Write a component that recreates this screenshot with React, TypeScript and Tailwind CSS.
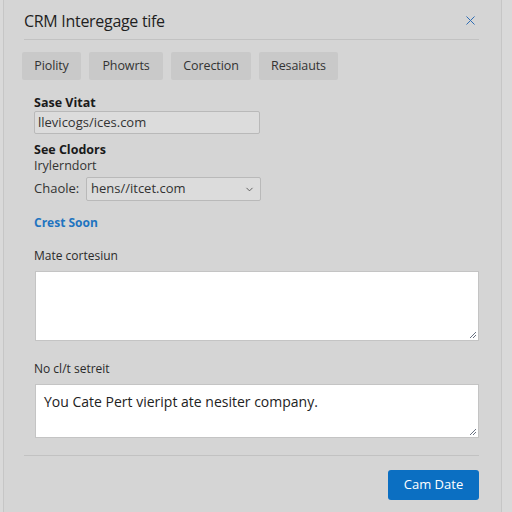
import { X, ChevronDown } from 'lucide-react';

const tabs = ['Piolity', 'Phowrts', 'Corection', 'Resaiauts'];

function ResizeGrip() {
    return (
        <svg width="9" height="9" viewBox="0 0 9 9" className="absolute right-[1px] bottom-[1px] text-gray-500">
            <path d="M8 2 L2 8 M8 5 L5 8" stroke="currentColor" strokeWidth="1" />
        </svg>
    );
}

export default function App() {
    return (
        <div className="w-[512px] h-[512px] bg-[#d9d9d9] overflow-hidden" style={{ fontFamily: '"Open Sans", "Noto Sans", sans-serif' }}>
            <div className="h-full ml-[3px] mr-[10px] bg-[#d5d5d5] border-x border-[#c6c6c6] px-[20px]">
                {/* Header */}
                <div className="flex items-center justify-between h-[40px] pt-[2px] border-b border-[#c2c2c2] mr-[2px]">
                    <h1 className="text-[16px] text-[#1f1f1f] tracking-[-0.3px]">CRM Interegage tife</h1>
                    <X size={15} strokeWidth={1.6} className="text-[#2e6db4] mr-[1px]" />
                </div>

                {/* Tabs */}
                <div className="flex gap-[8px] mt-[12px] -ml-[2px]">
                    {tabs.map((t, i) => (
                        <div
                            key={t}
                            className={
                                'h-[28px] flex items-center justify-center bg-[#c9c9c9] rounded-[2px] text-[12.5px] text-[#333] tracking-[-0.1px] ' +
                                (i === 0 ? 'w-[59px]' : i === 1 ? 'w-[74px]' : i === 2 ? 'w-[80px]' : 'w-[79px]')
                            }
                        >
                            {t}
                        </div>
                    ))}
                </div>

                <div className="pl-[10px]">
                    {/* Site */}
                    <div className="mt-[15px] text-[12.5px] font-bold text-[#1a1a1a] leading-[16px]">Sase Vitat</div>
                    <div className="w-[226px] h-[23px] bg-[#dcdcdc] border border-[#b9b9b9] rounded-[2px] flex items-center px-[3px] text-[13px] text-[#333]">
                        llevicogs/ices.com
                    </div>

                    <div className="mt-[8px] text-[12.5px] font-bold text-[#1a1a1a] leading-[15px]">See Clodors</div>
                    <div className="mt-[1px] text-[12.5px] text-[#333] leading-[15px]">Irylerndort</div>

                    <div className="flex items-center mt-[4px]">
                        <span className="w-[52px] text-[13px] text-[#333]">Chaole:</span>
                        <div className="w-[175px] h-[24px] bg-[#dcdcdc] border border-[#b9b9b9] rounded-[2px] flex items-center justify-between pl-[4px] pr-[5px] text-[13px] text-[#333]">
                            <span>hens//itcet.com</span>
                            <ChevronDown size={11} strokeWidth={2} className="text-[#555]" />
                        </div>
                    </div>

                    <div className="mt-[14px] text-[12px] font-bold text-[#1f74c0] leading-[16px]">Crest Soon</div>

                    {/* Notes */}
                    <div className="mt-[17px] text-[12px] text-[#2a2a2a] leading-[16px]">Mate cortesiun</div>
                    <div className="relative mt-[7px] ml-[1px] w-[444px] h-[70px] bg-white border border-[#c4c4c4]">
                        <ResizeGrip />
                    </div>

                    <div className="mt-[20px] text-[12px] text-[#2a2a2a] leading-[16px]">No cl/t setreit</div>
                    <div className="relative mt-[7px] ml-[1px] w-[444px] h-[54px] bg-white border border-[#c4c4c4] px-[8px] pt-[6px] text-[14px] text-[#222]">
                        You Cate Pert vieript ate nesiter company.
                        <ResizeGrip />
                    </div>
                </div>

                {/* Footer */}
                <div className="mt-[17px] border-t border-[#c2c2c2] mr-[2px] flex justify-end pt-[14px]">
                    <button className="w-[91px] h-[30px] bg-[#0b6fc2] rounded-[3px] text-white text-[13px]">Cam Date</button>
                </div>
            </div>
        </div>
    );
}
